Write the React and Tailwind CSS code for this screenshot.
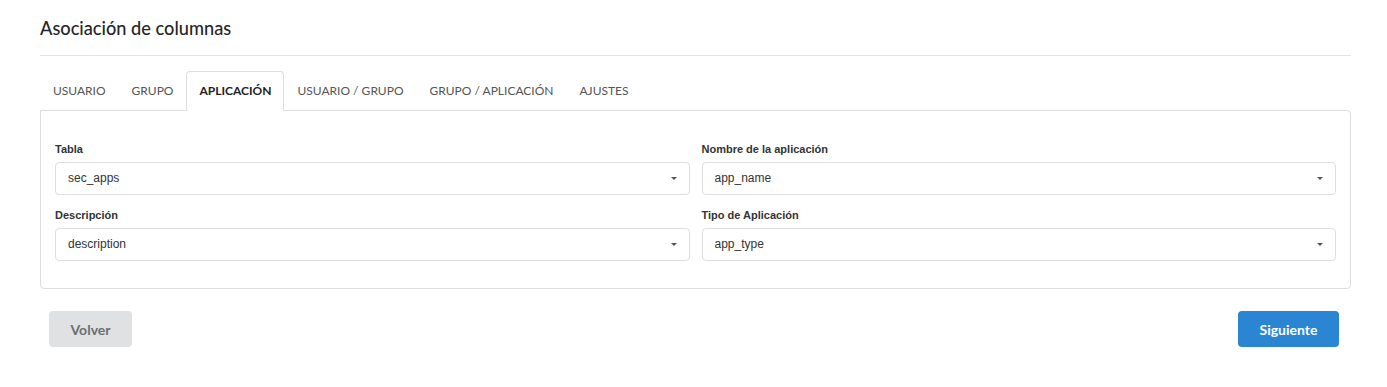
import React from "react";

const tabs = ["USUARIO", "GRUPO", "APLICACIÓN", "USUARIO / GRUPO", "GRUPO / APLICACIÓN", "AJUSTES"];

function Select({ value }) {
  return (
    <div className="flex h-[33px] items-center justify-between rounded-[4px] border border-[#dedede] bg-white pl-[12px] pr-[12px] text-[12px] text-[#333]" style={{ fontFamily: '"Liberation Sans", Arial, sans-serif' }}>
      <span className="-mt-px">{value}</span>
      <svg width="6" height="3" viewBox="0 0 6 3">
        <path d="M0 0 L6 0 L3 3 Z" fill="#555" />
      </svg>
    </div>
  );
}

function Field({ label, value, last }) {
  return (
    <div className={last ? "" : "mb-[13px]"}>
      <div className="mb-[4px] text-[11px] font-bold leading-[15px] pb-px text-[#333]" style={{ fontFamily: '"Liberation Sans", Arial, sans-serif' }}>
        {label}
      </div>
      <Select value={value} />
    </div>
  );
}

export default function App() {
  return (
    <div className="min-h-[387px] bg-white pt-4" style={{ fontFamily: 'Lato, "Open Sans", sans-serif' }}>
      <div className="ml-[40px] w-[1311px]">
        <h1 className="text-[18.2px] leading-[24px] font-medium text-[#262626]">Asociación de columnas</h1>
        <div className="mt-[15px] h-px bg-[#e3e3e3]" />
        <div className="mt-[15px] -mb-px flex">
          {tabs.map((t) => {
            const active = t === "APLICACIÓN";
            return (
              <div
                key={t}
                className={
                  active
                    ? "relative z-10 rounded-t-[4px] border border-b-0 border-[#dedede] bg-white px-3 pt-[10px] pb-[11px] text-[12px] leading-[18px] font-bold text-[#222]"
                    : "border border-b-0 border-transparent px-3 pt-[10px] pb-[11px] text-[12px] leading-[18px] text-[#555]"
                }
              >
                {t}
              </div>
            );
          })}
        </div>
        <div className="rounded-b-[4px] rounded-tr-[4px] border border-[#dedede] px-[14px] pt-[31px] pb-[27px]">
          <div className="grid grid-cols-2 gap-x-[12px]">
            <Field label="Tabla" value="sec_apps" />
            <Field label="Nombre de la aplicación" value="app_name" />
            <Field label="Descripción" value="description" last />
            <Field label="Tipo de Aplicación" value="app_type" last />
          </div>
        </div>
        <div className="mt-[22px] flex justify-between pl-[9px] pr-[12px]">
          <button className="h-[36px] w-[83px] rounded-[4px] bg-[#dfe1e3] text-[14px] font-bold text-[#6b6e72]">Volver</button>
          <button className="h-[36px] w-[101px] rounded-[4px] bg-[#2a86d3] text-[14px] font-bold text-white">Siguiente</button>
        </div>
      </div>
    </div>
  );
}
